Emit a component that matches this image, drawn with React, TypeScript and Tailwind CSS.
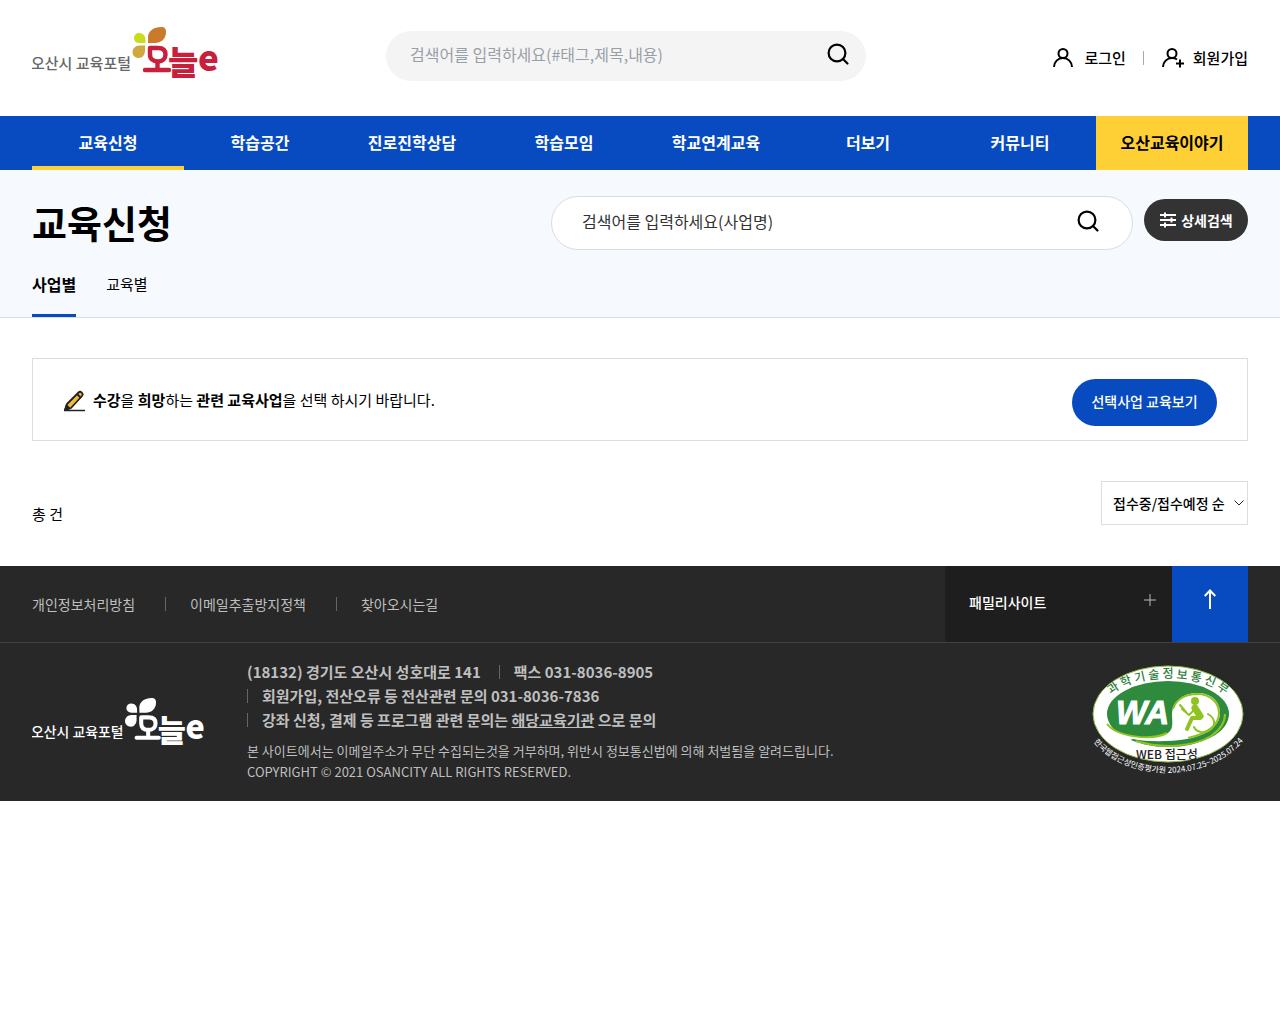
import React from 'react';

const NAV_ITEMS = ['교육신청', '학습공간', '진로진학상담', '학습모임', '학교연계교육', '더보기', '커뮤니티', '오산교육이야기'];

const POLICY_LINKS = ['개인정보처리방침', '이메일추출방지정책', '찾아오시는길'];

// ─────────────────────────────────────────────────────────────────────────────
// Logo - shared by header (colour) and footer (white)
// ─────────────────────────────────────────────────────────────────────────────
interface LogoProps {
  white?: boolean;
  className?: string;
}

const Logo: React.FC<LogoProps> = ({ white = false, className }) => {
  const main = white ? '#ffffff' : '#c8203c';
  return (
    <svg viewBox="0 0 188 56" className={className} role="img" aria-label="오산시 교육포털 오늘e">
      <path d="M116 18v-6C116 6 122 2 129 2c4 0 5 2 5 5 0 7-5 11-11 11z" fill={white ? main : '#cb7a2b'} />
      <path d="M113.500 18h-6c-3.500 0-5.500-2-5.500-5s2-5 5.500-5 6 3 6 6.500z" fill={white ? main : '#c8dc1e'} />
      <path d="M113 20.500v5c0 4-2.500 7.500-6 7.500-4 0-6.500-2.500-6.500-6s3-6.500 7-6.500z" fill={white ? main : '#cfa83f'} />
      <text x="-1" y="44" fontSize="15" fontWeight="500" fill={white ? main : '#666666'}>
        오산시 교육포털
      </text>
      <g fill="none" stroke={main} strokeWidth="4.4" strokeLinecap="round" strokeLinejoin="round">
        <path d="M118 23h8c5 0 7.500 2.500 7.500 6.500S131 36.500 126 36.500s-8-2.500-8-7z" />
        <path d="M125.500 38v6M113 45h24" />
      </g>
      <text x="136" y="50" fontSize="33" fontWeight="900" fill={main}>
        늘
      </text>
      <text x="166" y="46" fontSize="35" fontWeight="900" fill={main}>
        e
      </text>
    </svg>
  );
};

const SearchIcon: React.FC = () => (
  <svg viewBox="0 0 24 24" className="h-6 w-6" fill="none" stroke="currentColor" strokeWidth="2.2" strokeLinecap="round">
    <circle cx="11" cy="11" r="8.4" />
    <path d="M17 17l4.500 4.500" />
  </svg>
);

const UserIcon: React.FC<{ plus?: boolean }> = ({ plus = false }) => (
  <svg viewBox="0 0 24 22" className="h-[22px] w-6" fill="none" stroke="currentColor" strokeWidth="2">
    <circle cx="11" cy="6.5" r="4.5" />
    {plus ? <path d="M2 20c0-5 4-9 9-9 2 0 4 .6 5 1.500M19 12.500v8M15 16.500h8" /> : <path d="M2 20c0-5 4-9 9-9s9 4 9 9" />}
  </svg>
);

// WA web accessibility mark
const AccessibilityMark: React.FC = () => (
  <svg viewBox="0 0 156 118" className="h-[118px] w-[156px]" role="img" aria-label="WEB 접근성">
    <defs>
      <path id="mark-top" d="M20 30C45 9 107 9 132 30" />
      <path id="mark-bottom" d="M0 76C34 120 118 120 153 75" />
    </defs>
    <ellipse cx="76" cy="50" rx="75" ry="48" fill="#fff" stroke="#8cbd3f" strokeWidth="1" />
    <ellipse cx="76" cy="50" rx="61" ry="33" fill="#2e8b3d" />
    {/* light rim along the lower right */}
    <path d="M44 77c26 8 57 6 75-5 9-6 14-13 14-22" fill="none" stroke="#8fc31f" strokeWidth="2" />
    <path
      d="M13 60C24 73 60 77 76 69c6-4 4-12 4-18 0-13 11-22 25-22s23 8 23 20c0 15-17 23-33 26-18 3-40 3-54 0l-12 4-20-13z"
      fill="#fff"
    />
    <path d="M15 60c10 13 45 17 60 9" fill="none" stroke="#8fc31f" strokeWidth="2" />
    <path d="M81 45c3-10 13-15 24-15 13 0 22 8 22 19 0 13-14 21-31 25" fill="none" stroke="#8fc31f" strokeWidth="2" />
    <text x="24" y="60" fontSize="33" fontWeight="900" fontStyle="italic" fill="#fff" stroke="#fff" strokeWidth="1" className="font-['Liberation_Sans',sans-serif]">
      WA
    </text>
    <g fill="none" stroke="#8fc31f" strokeLinecap="round" strokeLinejoin="round">
      <circle cx="103" cy="37" r="4" fill="#8fc31f" stroke="none" />
      <path d="M103 44l5 8" strokeWidth="7" />
      <path d="M108 54h-8l-5 11" strokeWidth="4" />
      <path d="M103 45l-6 6-7-6M88 41l6 7" strokeWidth="2" />
      <path d="M116 50c7 4 8 11 3 15-5 5-14 4-17-2" strokeWidth="2" />
    </g>
    <text fontSize="12" fontWeight="500" fill="#2e7d3a">
      <textPath href="#mark-top" startOffset="50%" textAnchor="middle">과 학 기 술 정 보 통 신 부</textPath>
    </text>
    <text x="75" y="95" textAnchor="middle" fontSize="12" fontWeight="500" fill="#222">
      WEB 접근성
    </text>
    <text fontSize="8" fill="#fff">
      <textPath href="#mark-bottom" startOffset="50%" textAnchor="middle">한국웹접근성인증평가원 2024.07.25~2025.07.24</textPath>
    </text>
  </svg>
);

const Header: React.FC = () => (
  <header>
    <div className="grid h-[116px] grid-cols-[354fr_480fr_382fr] items-center px-8">
      <a href="#home" className="mb-[10px] justify-self-start">
        <Logo className="h-14 w-[188px]" />
      </a>
      <form className="mb-1 flex h-[50px] items-center rounded-full bg-[#f4f4f4] pr-4 pl-6">
        <input
          type="text"
          aria-label="통합검색"
          placeholder="검색어를 입력하세요(#태그,제목,내용)"
          className="min-w-0 flex-1 bg-transparent pb-1 outline-none placeholder:text-[#999fa8]"
        />
        <button type="button" aria-label="검색" className="mb-1">
          <SearchIcon />
        </button>
      </form>
      <div className="flex items-center justify-end text-[15px] font-medium">
        <a href="#login" className="flex items-center gap-2">
          <UserIcon />
          로그인
        </a>
        <span className="mx-[17px] h-[14px] w-px bg-[#aaaaaa]" />
        <a href="#join" className="flex items-center gap-2">
          <UserIcon plus />
          회원가입
        </a>
      </div>
    </div>
    <nav className="bg-[#084bc1] px-8">
      <ul className="grid grid-cols-8 text-center font-bold text-white">
        {NAV_ITEMS.map((item, i) => (
          <li key={item}>
            <a
              href="#menu"
              className={`block h-[54px] leading-[52px] ${i === 0 ? 'border-b-4 border-[#ffd035]' : ''} ${
                i === NAV_ITEMS.length - 1 ? 'bg-[#ffd035] text-black' : ''
              }`}
            >
              {item}
            </a>
          </li>
        ))}
      </ul>
    </nav>
  </header>
);

const PageTop: React.FC = () => (
  <section className="border-b border-[#d8dee5] bg-[#f6f9fe] px-8 pt-[26px]">
    <div className="flex items-start justify-between">
      <h1 className="text-[38px] leading-[52px] font-bold">교육신청</h1>
      <div className="flex items-start gap-[11px]">
        <form className="flex h-[54px] w-[582px] items-center rounded-full border border-[#d8dde3] bg-white pr-8 pb-1 pl-[30px]">
          <input
            type="text"
            aria-label="사업명 검색"
            placeholder="검색어를 입력하세요(사업명)"
            className="min-w-0 flex-1 bg-transparent outline-none placeholder:text-[#333333]"
          />
          <button type="button" aria-label="검색">
            <SearchIcon />
          </button>
        </form>
        <button
          type="button"
          className="mt-[3px] flex h-[42px] w-[104px] items-center justify-center gap-1 rounded-full bg-[#333333] text-sm font-bold text-white"
        >
          <svg viewBox="0 0 18 16" className="h-4 w-[18px]" fill="none" stroke="currentColor" strokeWidth="2">
            <path d="M1 3h16M1 8h16M1 13h16" />
            <path d="M6 .500v5M12.500 5.500v5M6 10.500v5" />
          </svg>
          상세검색
        </button>
      </div>
    </div>
    <div className="mt-3 flex gap-[30px]">
      <a href="#business" className="h-[55px] border-b-3 border-[#084bc1] leading-[44px] font-bold">사업별</a>
      <a href="#course" className="text-[15px] leading-[44px]">교육별</a>
    </div>
  </section>
);

const Content: React.FC = () => (
  <main className="px-8 pt-10 pb-[41px]">
    <div className="flex items-center justify-between border border-[#dddddd] px-[30px] pt-5 pb-[14px]">
      <p className="flex items-center gap-2 pb-1 text-[15px]">
        <svg viewBox="0 0 22 22" className="h-[22px] w-[22px]" fill="none" stroke="#222" strokeWidth="1.8" strokeLinejoin="round">
          <path d="M2 20l2-6L15.500 2.500c2-2 5.500 1 3.500 3.500L8 18z" fill="#f5b93a" />
          <path d="M14 4l4 4" />
          <path d="M2 20l1.500-4.500 3 3z" fill="#222" />
          <path d="M1 20.500h21" strokeWidth="1.500" />
        </svg>
        <span>
          <b>수강</b>을 <b>희망</b>하는 <b>관련 교육사업</b>을 선택 하시기 바랍니다.
        </span>
      </p>
      <button type="button" className="h-[47px] w-[145px] rounded-full bg-[#084bc1] pb-1 text-sm font-medium text-white">
        선택사업 교육보기
      </button>
    </div>
    <div className="mt-10 flex items-end justify-between">
      <p className="text-[15px] leading-[22px]">총 건</p>
      <div className="relative">
        <select aria-label="정렬" className="h-11 w-[147px] appearance-none border border-[#dddddd] bg-white pl-[11px] text-sm font-medium">
          <option>접수중/접수예정 순</option>
        </select>
        <svg viewBox="0 0 10 6" className="pointer-events-none absolute top-[19px] right-1 h-[6px] w-[10px]" fill="none" stroke="#222">
          <path d="M.500.500L5 5l4.500-4.500" />
        </svg>
      </div>
    </div>
  </main>
);

const Footer: React.FC = () => (
  <footer className="bg-[#282828] text-[#bfbfbf]">
    <div className="flex items-stretch justify-between border-b border-[#414141] px-8">
      <ul className="flex items-center text-sm">
        {POLICY_LINKS.map((link, i) => (
          <li key={link} className="flex items-center">
            {i > 0 && <span className="mr-6 ml-[30px] h-[14px] w-px bg-[#666666]" />}
            <a href="#policy">{link}</a>
          </li>
        ))}
      </ul>
      <div className="flex h-[76px]">
        <button type="button" className="flex w-[227px] items-center justify-between bg-[#1e1e1e] pr-4 pb-1 pl-6 text-sm font-medium text-white">
          패밀리사이트
          <svg viewBox="0 0 12 12" className="mb-1 h-3 w-3" stroke="#bbbbbb">
            <path d="M6 0v12M0 6h12" />
          </svg>
        </button>
        <a href="#top" aria-label="맨 위로" className="flex w-[76px] items-center justify-center bg-[#084bc1] pb-[10px]">
          <svg viewBox="0 0 12 20" className="h-5 w-3" fill="none" stroke="#fff" strokeWidth="2">
            <path d="M6 20V1.500M.700 7L6 1.500 11.300 7" />
          </svg>
        </a>
      </div>
    </div>
    <div className="flex items-start px-8 pt-[17px] pb-[19px]">
      <a href="#home" className="mt-9 w-[215px]">
        <Logo white className="h-[52px] w-[174px]" />
      </a>
      <div className="flex-1">
        <address className="text-[15px] leading-6 font-bold not-italic">
          <p className="flex items-center">
            (18132) 경기도 오산시 성호대로 141
            <span className="mr-[14px] ml-[18px] h-[14px] w-px bg-[#666666]" />
            팩스 031-8036-8905
          </p>
          <p className="flex items-center">
            <span className="mr-[14px] h-[14px] w-px bg-[#666666]" />
            회원가입, 전산오류 등 전산관련 문의 031-8036-7836
          </p>
          <p className="flex items-center">
            <span className="mr-[14px] h-[14px] w-px bg-[#666666]" />
            <span>
              강좌 신청, 결제 등 프로그램 관련 문의는 <a href="#org" className="underline">해당교육기관</a> 으로 문의
            </span>
          </p>
        </address>
        <p className="mt-2 text-[13px] leading-[21px]">
          본 사이트에서는 이메일주소가 무단 수집되는것을 거부하며, 위반시 정보통신법에 의해 처벌됨을 알려드립니다.
          <br />
          COPYRIGHT © 2021 OSANCITY ALL RIGHTS RESERVED.
        </p>
      </div>
      <div className="mt-1">
        <AccessibilityMark />
      </div>
    </div>
  </footer>
);

export default function App() {
  return (
    <div className="bg-white font-['Noto_Sans_CJK_KR',sans-serif] text-base text-black">
      <Header />
      <PageTop />
      <Content />
      <Footer />
    </div>
  );
}
